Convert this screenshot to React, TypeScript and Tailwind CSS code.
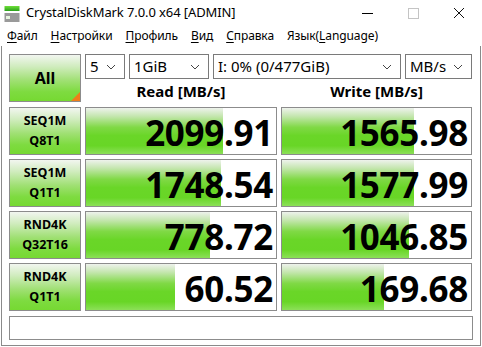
import React from "react";

const rows = [
  { l1: "SEQ1M", l2: "Q8T1", read: "2099.91", rp: 72, write: "1565.98", wp: 70 },
  { l1: "SEQ1M", l2: "Q1T1", read: "1748.54", rp: 71, write: "1577.99", wp: 70 },
  { l1: "RND4K", l2: "Q32T16", read: "778.72", rp: 65, write: "1046.85", wp: 67 },
  { l1: "RND4K", l2: "Q1T1", read: "60.52", rp: 47, write: "169.68", wp: 54 },
];

const menu = [
  { u: "Ф", rest: "айл" },
  { u: "Н", rest: "астройки" },
  { u: "П", rest: "рофиль" },
  { u: "В", rest: "ид" },
  { u: "С", rest: "правка" },
];

const btnGrad =
  "bg-[linear-gradient(to_bottom,#f2f6f0_0%,#d0ecbe_25%,#a0e074_55%,#7edb40_80%,#76d932_100%)]";
const barGrad =
  "bg-[linear-gradient(to_bottom,#eef2ec_0%,#c4e6ae_18%,#80d946_42%,#6ad628_60%,#68d626_82%,#8ce058_100%)]";

function Chevron() {
  return (
    <svg width="10" height="6" viewBox="0 0 10 6" className="shrink-0">
      <path d="M1 1 L5 5 L9 1" fill="none" stroke="#444" strokeWidth="1" />
    </svg>
  );
}

function Combo({ text, w }: { text: string; w: string }) {
  return (
    <div className={`${w} h-[25px] border border-[#7a7a7a] bg-white flex items-center justify-between pl-[4px] pr-[8px]`}>
      <span className="text-[15px] leading-none">{text}</span>
      <Chevron />
    </div>
  );
}

function Value({ text, pct }: { text: string; pct: number }) {
  return (
    <div className="relative h-[48px] border border-[#8c8c8c] bg-white overflow-hidden">
      <div className={`absolute left-0 top-0 bottom-0 ${barGrad}`} style={{ width: `${pct}%` }} />
      <div className="relative h-full flex items-center justify-end pr-[3px] pt-[4px]">
        <span className="text-[35px] font-bold leading-none tracking-[-0.3px]">{text}</span>
      </div>
    </div>
  );
}

export default function App() {
  return (
    <div className="w-[482px] h-[347px] bg-white flex flex-col text-black font-['Noto_Sans',sans-serif] overflow-hidden">
      <div className="h-[26px] flex items-center shrink-0">
        <svg width="16" height="18" viewBox="0 0 16 18" className="ml-[4px] mt-[1px]">
          <defs>
            <linearGradient id="gt" x1="0" y1="0" x2="0" y2="1">
              <stop offset="0" stopColor="#6fe03a" />
              <stop offset="1" stopColor="#2aa01a" />
            </linearGradient>
          </defs>
          <rect x="0.5" y="1" width="15" height="5" fill="url(#gt)" />
          <rect x="0.5" y="8" width="15" height="9" fill="#9a9a9a" />
          <rect x="2" y="11" width="4" height="3" fill="#e8f5e0" />
        </svg>
        <span className="ml-[6px] text-[13px] tracking-[-0.1px]">CrystalDiskMark 7.0.0 x64 [ADMIN]</span>
        <div className="ml-auto flex items-center h-full">
          <div className="w-[46px] h-full flex items-center justify-center">
            <div className="w-[11px] h-[1px] bg-black" />
          </div>
          <div className="w-[46px] h-full flex items-center justify-center">
            <div className="w-[11px] h-[11px] border border-[#c4c4c4]" />
          </div>
          <div className="w-[46px] h-full flex items-center justify-center">
            <svg width="12" height="12" viewBox="0 0 12 12">
              <path d="M1 1 L11 11 M11 1 L1 11" stroke="#111" strokeWidth="1" />
            </svg>
          </div>
        </div>
      </div>
      <div className="h-[20px] flex items-center pl-[7px] gap-[13px] text-[12px] tracking-[-0.1px] shrink-0">
        {menu.map((m) => (
          <span key={m.u}>
            <span className="underline underline-offset-2">{m.u}</span>
            {m.rest}
          </span>
        ))}
        <span>
          Язык(<span className="underline underline-offset-2">L</span>anguage)
        </span>
      </div>
      <div className="flex-1 mx-[1px] mb-[1px] border-l border-r border-b border-[#8a8a8a] px-[7px] pt-[8px]">
        <div className="flex gap-[4px]">
          <div className={`relative w-[72px] h-[48px] border border-[#8c8c8c] ${btnGrad} flex items-center justify-center`}>
            <span className="text-[16px] font-bold leading-none">All</span>
            <div className="absolute right-0 bottom-0 w-0 h-0 border-l-[9px] border-l-transparent border-b-[9px] border-b-[#f07d1a]" />
          </div>
          <div className="flex-1 flex flex-col">
            <div className="flex gap-[4px]">
              <Combo text="5" w="w-[40px]" />
              <Combo text="1GiB" w="w-[80px]" />
              <Combo text="I: 0% (0/477GiB)" w="w-[188px]" />
              <Combo text="MB/s" w="w-[67px]" />
            </div>
            <div className="flex flex-1 items-center gap-[4px] font-bold text-[15px] pt-[1px]">
              <div className="w-[192px] text-center">Read [MB/s]</div>
              <div className="w-[191px] text-center">Write [MB/s]</div>
            </div>
          </div>
        </div>
        <div className="mt-[4px] flex flex-col gap-[4px]">
          {rows.map((r) => (
            <div key={r.l1 + r.l2} className="flex gap-[4px]">
              <div className={`w-[72px] h-[48px] border border-[#8c8c8c] ${btnGrad} flex flex-col items-center justify-center gap-[2px] text-[12.5px] font-bold leading-[18px]`}>
                <span>{r.l1}</span>
                <span>{r.l2}</span>
              </div>
              <div className="w-[192px]">
                <Value text={r.read} pct={r.rp} />
              </div>
              <div className="w-[191px]">
                <Value text={r.write} pct={r.wp} />
              </div>
            </div>
          ))}
        </div>
        <div className="mt-[5px] h-[24px] border border-[#8c8c8c] bg-white" />
      </div>
    </div>
  );
}
